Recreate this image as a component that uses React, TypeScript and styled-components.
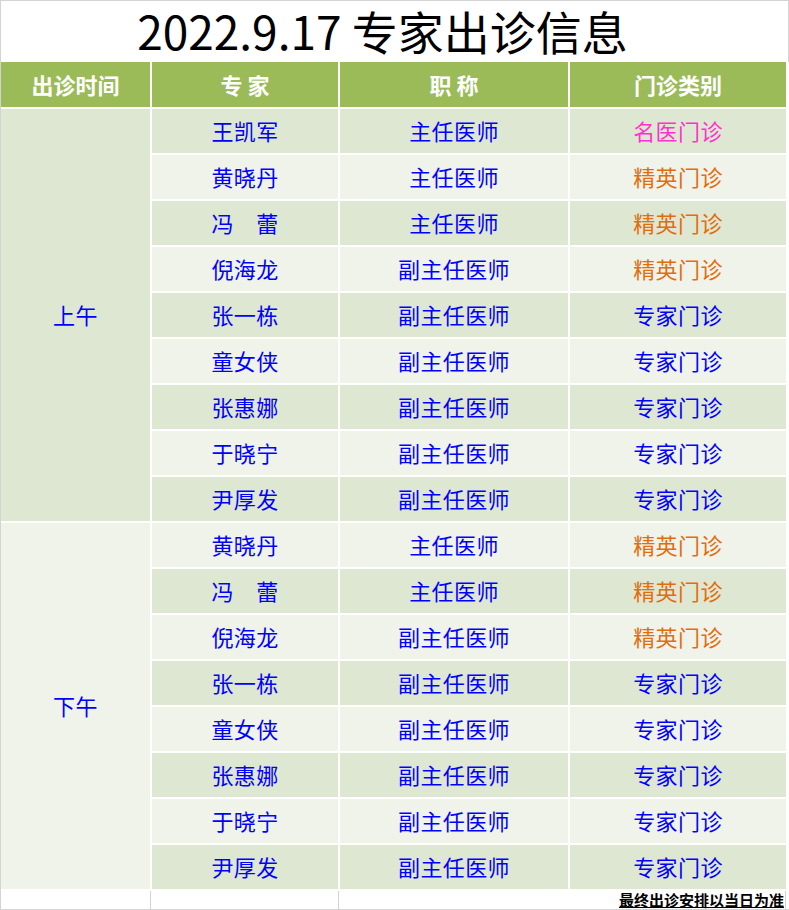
import React from "react";
import styled, { createGlobalStyle } from "styled-components";

const GlobalStyle = createGlobalStyle`
  body {
    margin: 0;
    background: white;
    font-family: "Noto Sans CJK SC", "Noto Sans", sans-serif;
  }
`;

const COLORS = {
  header: "#9bbb59",
  dark: "#dee7d1",
  light: "#eff3ea",
  grid: "#d4d4d4",
};

const typeColor: Record<string, string> = {
  名医门诊: "#ff33cc",
  精英门诊: "#e46c0a",
  专家门诊: "#0000ff",
};

const Sheet = styled.div`
  width: 789px;
  height: 910px;
  box-sizing: border-box;
  border-left: 1px solid ${COLORS.grid};
  border-top: 1px solid ${COLORS.grid};
  border-bottom: 1px solid ${COLORS.grid};
  display: flex;
  flex-direction: column;
`;

const Title = styled.div`
  height: 61px;
  box-sizing: border-box;
  border-right: 1px solid ${COLORS.grid};
  display: flex;
  align-items: center;
  justify-content: center;
  padding: 0 24px 3px 0;
  font-size: 46px;
  color: #000;
  line-height: 58px;
`;

const Table = styled.div`
  display: grid;
  grid-template-columns: 149px 186px 228px 216px;
  grid-template-rows: 45px repeat(17, 44px) 18px;
  column-gap: 2px;
  row-gap: 2px;
  width: 787px;
`;

const HeadCell = styled.div`
  background: ${COLORS.header};
  color: white;
  font-weight: bold;
  font-size: 22px;
  display: flex;
  align-items: center;
  justify-content: center;
  padding-bottom: 2px;
  white-space: pre;
`;

const Cell = styled.div<{ $dark: boolean; $color?: string }>`
  background: ${(p) => (p.$dark ? COLORS.dark : COLORS.light)};
  color: ${(p) => p.$color || "#0000ff"};
  font-size: 22px;
  letter-spacing: 0.4px;
  display: flex;
  align-items: center;
  justify-content: center;
  padding-bottom: 3px;
  white-space: pre;
`;

const SessionCell = styled(Cell)<{ $span: number }>`
  grid-row: span ${(p) => p.$span};
`;

const FootCell = styled.div`
  background: white;
  box-shadow: 1px 0 0 ${COLORS.grid};
`;

const FootNote = styled.div`
  grid-column: span 2;
  font-size: 15px;
  font-weight: bold;
  text-decoration: underline;
  color: #000;
  text-align: right;
  line-height: 18px;
  padding-right: 1px;
  border-right: 1px solid ${COLORS.grid};
  white-space: nowrap;
`;

type Row = [string, string, string];

const morning: Row[] = [
  ["王凯军", "主任医师", "名医门诊"],
  ["黄晓丹", "主任医师", "精英门诊"],
  ["冯　蕾", "主任医师", "精英门诊"],
  ["倪海龙", "副主任医师", "精英门诊"],
  ["张一栋", "副主任医师", "专家门诊"],
  ["童女侠", "副主任医师", "专家门诊"],
  ["张惠娜", "副主任医师", "专家门诊"],
  ["于晓宁", "副主任医师", "专家门诊"],
  ["尹厚发", "副主任医师", "专家门诊"],
];

const afternoon: Row[] = [
  ["黄晓丹", "主任医师", "精英门诊"],
  ["冯　蕾", "主任医师", "精英门诊"],
  ["倪海龙", "副主任医师", "精英门诊"],
  ["张一栋", "副主任医师", "专家门诊"],
  ["童女侠", "副主任医师", "专家门诊"],
  ["张惠娜", "副主任医师", "专家门诊"],
  ["于晓宁", "副主任医师", "专家门诊"],
  ["尹厚发", "副主任医师", "专家门诊"],
];

const sessions = [
  { label: "上午", rows: morning, offset: 0 },
  { label: "下午", rows: afternoon, offset: morning.length },
];

const App = () => {
  return (
    <>
      <GlobalStyle />
      <Sheet>
        <Title>2022.9.17 专家出诊信息</Title>
        <Table>
          <HeadCell>出诊时间</HeadCell>
          <HeadCell>专 家</HeadCell>
          <HeadCell>职 称</HeadCell>
          <HeadCell>门诊类别</HeadCell>
          {sessions.map((s) =>
            s.rows.map((row, i) => {
              const dark = (s.offset + i) % 2 === 0;
              return (
                <React.Fragment key={s.label + i}>
                  {i === 0 && (
                    <SessionCell $dark={s.offset % 2 === 0} $span={s.rows.length}>
                      {s.label}
                    </SessionCell>
                  )}
                  <Cell $dark={dark}>{row[0]}</Cell>
                  <Cell $dark={dark}>{row[1]}</Cell>
                  <Cell $dark={dark} $color={typeColor[row[2]]}>
                    {row[2]}
                  </Cell>
                </React.Fragment>
              );
            })
          )}
          <FootCell />
          <FootCell />
          <FootNote>最终出诊安排以当日为准</FootNote>
        </Table>
      </Sheet>
    </>
  );
};

export default App;
